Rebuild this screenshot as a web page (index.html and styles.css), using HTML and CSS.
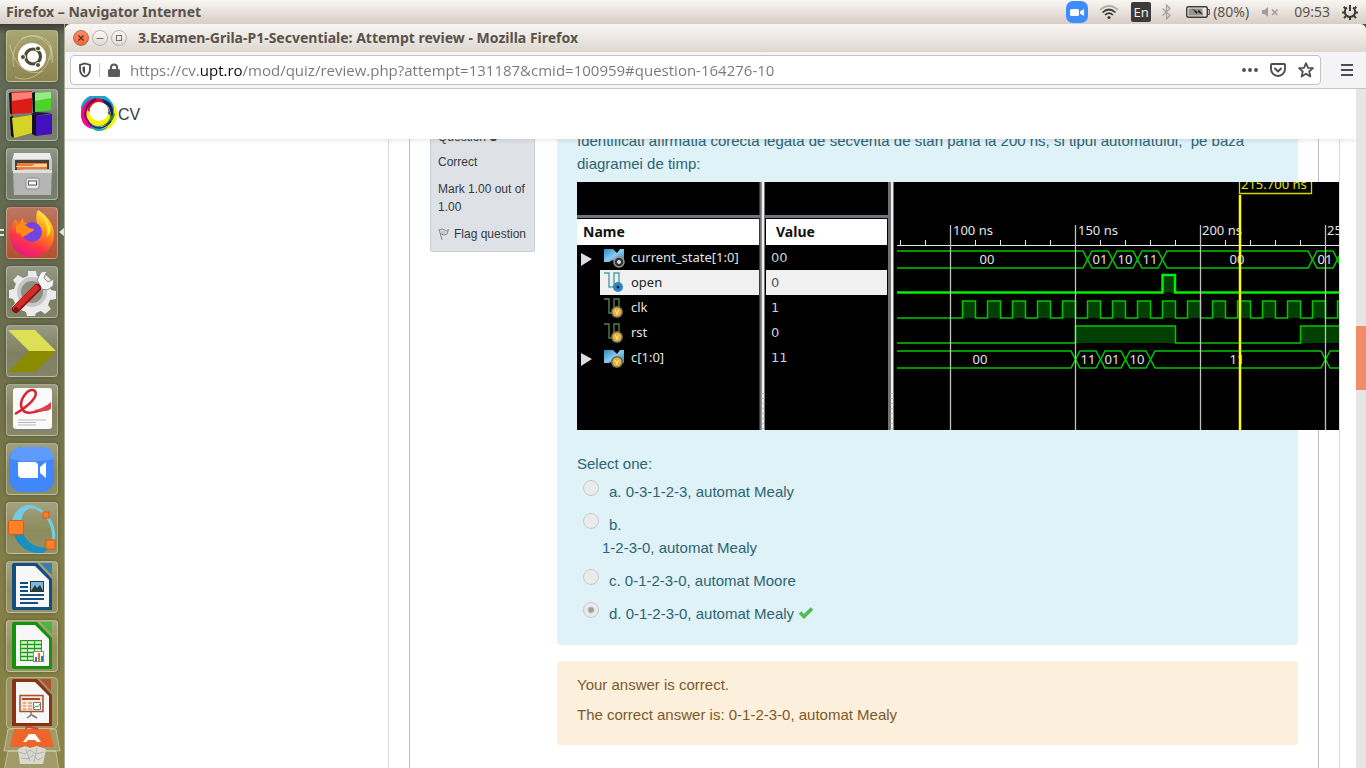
FILE: index.html
```html
<!DOCTYPE html>
<html lang="ro">
<head>
<meta charset="utf-8">
<title>3.Examen-Grila-P1-Secventiale: Attempt review</title>
<link rel="stylesheet" href="styles.css">
</head>
<body>
<div class="desktop">
  <header class="panel">
    <span class="panel-title">Firefox – Navigator Internet</span>
    <div class="tray">
      <svg class="tray-zoom" width="22" height="22" viewBox="0 0 22 22"><rect width="22" height="22" rx="7" fill="#3f8cff"/><rect x="4" y="8" width="9" height="7" rx="1.500" fill="#fff"/><path d="M14 10.500l4-2.500v7l-4-2.500z" fill="#fff"/></svg>
      <svg class="tray-wifi" width="20" height="16" viewBox="0 0 20 16" fill="none" stroke-width="1.700"><path d="M1 6Q10-2 19 6" stroke="#b3aea8"/><path d="M3.500 8.500Q10 2.500 16.500 8.500M6 11Q10 7 14 11" stroke="#3c3b37"/><circle cx="10" cy="13.500" r="1.600" fill="#3c3b37"/></svg>
      <span class="lang">En</span>
      <svg class="tray-bt" width="9" height="16" viewBox="0 0 9 16" fill="none" stroke="#a7a29c" stroke-width="1.300"><path d="M.5 4.500l7.500 7-3.500 3.500V1l3.500 3.500-7.500 7"/></svg>
      <svg class="tray-batt" width="24" height="12" viewBox="0 0 24 12"><rect x=".7" y=".7" width="20.600" height="10.600" rx="1.500" fill="none" stroke="#3c3b37" stroke-width="1.400"/><path d="M22 3.500h1.300v5H22" fill="none" stroke="#3c3b37"/><rect x="2.500" y="2.500" width="14" height="7" fill="#97938d"/><path d="M6 2.500l6 3.500 .5-2.500 5 5.500-6-3-1 2z" fill="#262522"/></svg>
      <span class="panel-text">(80%)</span>
      <svg class="tray-mute" width="18" height="12" viewBox="0 0 18 12"><path d="M1 4h2.500L7 1v10L3.500 8H1z" fill="#a39e98"/><path d="M11 3.500l5.500 5.500M16.500 3.500L11 9" stroke="#a39e98" stroke-width="1.600"/></svg>
      <span class="panel-text clock">09:53</span>
      <svg class="tray-power" width="16" height="16" viewBox="0 0 16 16" fill="none" stroke="#3c3b37"><path d="M5 3.500a5.200 5.200 0 1 0 6 0" stroke-width="2"/><path d="M8 1v6" stroke-width="2"/><path d="M3.500 4.500L1.700 2.700M12.500 4.500l1.800-1.800M2.800 8.500H0M13.200 8.500H16M4 12l-2 2M12 12l2 2M8 13v3" stroke-width="2"/></svg>
    </div>
  </header>

  <div class="workspace">
    <nav class="launcher" aria-label="Launcher">
      <div class="tiles">
        <button class="tile tile-dash" aria-label="Dash"><svg width="50" height="50" viewBox="0 0 50 50"><g fill="none" stroke="#e3dfb3" stroke-opacity=".55"><path d="M7 36C2 18 15 2 30 5s17 14 13 24M3 14C9 42 27 44 36 40M8 46C22 54 47 38 43 14M14 8C28-1 49 12 45 32"/></g><circle cx="25" cy="26" r="14" fill="#fff"/><circle cx="26" cy="25.500" r="7.500" fill="none" stroke="#4d4b31" stroke-width="3.200"/><g fill="#4d4b31" stroke="#fff"><circle cx="16" cy="26" r="2.500"/><circle cx="31" cy="17.500" r="2.500"/><circle cx="31" cy="34" r="2.500"/></g></svg></button>
        <button class="tile" aria-label="Code::Blocks"><svg width="50" height="50" viewBox="0 0 50 50"><path d="M2 3l3-1v23L3 23zM25 3l3-1v20l-2 1zM3 27l3-1 1 22-3-2zM24 25l5-1v22l-4-2z" fill="#111"/><path d="M4 2l21-1v22L5 24z" fill="#db1d16"/><path d="M5 3l20-1v6L5 11z" fill="#fb8177"/><path d="M28 3l16-1v18l-16 2z" fill="#4bd52b"/><path d="M28 3l16-1v6l-16 3z" fill="#95ec83"/><path d="M5 28l20-3v18L7 48z" fill="#d6d326"/><path d="M29 26l16-2v20l-16 2z" fill="#4310bd"/><path d="M24 24l4-2 17 1-16 3z" fill="#22104d"/></svg></button>
        <button class="tile" aria-label="Files"><svg width="50" height="50" viewBox="0 0 50 50"><path d="M7 4h36l2 9H5z" fill="#ededed"/><path d="M5 10h40v12H5z" fill="#c7c7c7"/><path d="M8 11h34v12H8z" fill="#44413d"/><path d="M10 14h30v8H10z" fill="#ef7c35"/><path d="M9 17h16l3-2h12v3H9z" fill="#ffd0a0"/><path d="M6 21h9l2-1h28l-1 26H7z" fill="#b5b5b5"/><path d="M6 21h39v3H6z" fill="#dedede"/><rect x="19" y="29" width="13" height="11" rx="2" fill="#e8e8e8" stroke="#8b8b8b"/><rect x="21.500" y="32" width="8" height="4" fill="#fff" stroke="#555"/></svg></button>
        <button class="tile tile-firefox" aria-label="Firefox"><svg width="50" height="50" viewBox="0 0 50 50"><defs><linearGradient id="fx" x1=".8" y1="0" x2=".3" y2="1"><stop offset="0" stop-color="#fff44f"/><stop offset=".35" stop-color="#ff980e"/><stop offset=".7" stop-color="#ff3647"/><stop offset="1" stop-color="#e31587"/></linearGradient></defs><path d="M31 2c8 5 16 13 16 25 0 13-10 22-22 22S3 40 3 27c0-6 3-11 5-16l4 4 4-5c0 4 2 5 6 5l8 2c-1-6-1-12 1-15z" fill="url(#fx)"/><circle cx="25" cy="24" r="10" fill="#7542e5"/><path d="M9 18c5-4 10-1 13 2l5 1c0 3-5 3-7 6l-5 2c-1-4-4-5-6-4z" fill="#ff8a16"/><path d="M31 3c5 7 11 13 9 26 8-8 1-18-9-26z" fill="#ffe13d"/></svg></button>
        <button class="tile" aria-label="System Settings"><svg width="50" height="50" viewBox="0 0 50 50"><path d="M21 4h8l1 5 5 2 4-3 6 6-3 4 2 5 5 1v8l-6 1-2 5 3 4-6 5-4-3-5 2-1 3h-8l-1-4-5-2-4 3-5-6 3-4-2-4-4-1v-8l5-1 2-5-3-4 5-5 5 3 5-2z" fill="#ebebeb"/><circle cx="25" cy="25" r="13" fill="#8e8e7f" stroke="#c6c6c6" stroke-width="4"/><path d="M34 20l-4-7 4-8 6-1-3 7 4 4 6-3-1 7-6 4-6-1z" fill="#f4f4f4" stroke="#8b8b8b"/><path d="M9 42L30 21" stroke="#86100f" stroke-width="8" stroke-linecap="round"/><path d="M9 41L29 21" stroke="#d22b28" stroke-width="6" stroke-linecap="round"/><circle cx="9" cy="42" r="2" fill="#671818"/></svg></button>
        <button class="tile" aria-label="ISE"><svg width="50" height="50" viewBox="0 0 50 50"><path d="M1 4h27l21 21H22z" fill="#dde055"/><path d="M22 25h27L28 46H1z" fill="#8b8b00"/></svg></button>
        <button class="tile" aria-label="Document Viewer"><svg width="50" height="50" viewBox="0 0 50 50"><rect x="6" y="4" width="39" height="42" rx="3" fill="#80807a"/><rect x="6" y="3" width="39" height="41" rx="3" fill="#fafafa"/><path d="M8 29C20 22 32 12 28 6c-6-5-17 9-13 18 5 8 15 1 27 0" fill="none" stroke="#d92332" stroke-width="2.500"/><path d="M26 25q10-1 18-8v7q-8 4-18 1z" fill="#df414b"/><path d="M11 35h28M11 37.500h18M11 40h18" stroke="#b8b8b8"/></svg></button>
        <button class="tile" aria-label="Zoom"><svg width="50" height="50" viewBox="0 0 50 50"><rect x="2" y="3" width="45" height="45" rx="13" fill="#4087fc"/><path d="M3 15Q4 3 16 3h18q12 0 13 12Q25 20 3 15z" fill="#72aaff" fill-opacity=".6"/><path d="M11 18h16q4 0 4 4v12H15q-4 0-4-4zM33 23l6-5v16l-6-5z" fill="#fff"/></svg></button>
        <button class="tile" aria-label="Octave"><svg width="50" height="50" viewBox="0 0 50 50"><path d="M5 22C5 7 18-2 30 4c14 6 20 22 18 33l-3-1c1-10-4-24-15-29C20 2 14 11 14 21z" fill="#72cce6"/><path d="M6 28c3 14 15 24 30 22l8-6c-16 3-26-5-30-20z" fill="#1990c2"/><g fill="#ff8029" stroke="#d75b09"><rect x="1.500" y="17.500" width="15" height="14" rx="2"/><rect x="36" y="9" width="6" height="6"/><rect x="39" y="37" width="9" height="9"/></g></svg></button>
        <button class="tile" aria-label="LibreOffice Writer"><svg width="50" height="50" viewBox="0 0 50 50"><path d="M7 1h23l15 16v31H7q-2 0-2-2V3q0-2 2-2z" fill="#124e82"/><path d="M9 4h19l14 14v27H9z" fill="#f7f7f7"/><path d="M33 1h12v12z" fill="#397fae"/><path d="M13 21h8M13 25h8M13 29h8M13 33h24M13 37h24M13 41h18" stroke="#124e82" stroke-width="1.800"/><rect x="23.500" y="19.500" width="13" height="10" fill="#79b9df" stroke="#243846"/><path d="M24 29l4-6 2 3 3-3 3 6z" fill="#253b36"/></svg></button>
        <button class="tile" aria-label="LibreOffice Calc"><svg width="50" height="50" viewBox="0 0 50 50"><path d="M7 1h23l15 16v31H7q-2 0-2-2V3q0-2 2-2z" fill="#15920d"/><path d="M9 4h19l14 14v27H9z" fill="#f7f7f7"/><path d="M33 1h12v12z" fill="#4eb73b"/><rect x="13" y="19" width="22" height="21" fill="#1c9e12"/><path d="M14 21.500h20M14 25.500h20M14 29.500h20M14 33.500h20M14 37.500h20" stroke="#dff4da" stroke-width="2.500" stroke-dasharray="6 1"/><rect x="26.500" y="30.500" width="10" height="10" fill="#fff" stroke="#888"/><path d="M28 40v-4h2v4z" fill="#287ac0"/><path d="M31 40v-8h2v8z" fill="#ed6f17"/><path d="M34 40v-5h2v5z" fill="#287ac0"/></svg></button>
      </div>
      <svg class="folded" width="64" height="96" viewBox="0 0 64 96"><rect x="6.500" y="5.500" width="51" height="51" rx="4" fill="#fff" fill-opacity=".15" stroke="#fff" stroke-opacity=".35"/><path d="M14 7h23l15 16v31H12V9q0-2 2-2z" fill="#8b3214"/><path d="M16 10h19l14 14v27H16z" fill="#f7f7f7"/><path d="M40 7h11v12z" fill="#ad5331"/><rect x="20" y="23.500" width="23" height="16" fill="#f6e7dc" stroke="#a85026" stroke-width="1.500"/><path d="M22 27h18" stroke="#a64c22" stroke-width="2"/><path d="M23 31h3M23 34h3M23 37h3M28 31h4M28 34h4M28 37h4" stroke="#d3703a"/><path d="M33.500 30.500h7v7h-7z" fill="#fff" stroke="#777"/><path d="M34 36l2-2 2 1 2-3" stroke="#36a440" fill="none"/><path d="M31 40v3l-4 3M32 43l5 3" stroke="#777" stroke-width="1.500" fill="none"/><path d="M8 57h48l4 22H4zM8 79h48l3 20H4z" fill="#fff" fill-opacity=".2" stroke="#fff" stroke-opacity=".4"/><path d="M14 57h35l5 18H10z" fill="#ee642a"/><path d="M26 57q0-3 4-2 4 1 8 2" stroke="#c94d38" stroke-width="2" fill="none"/><path d="M23 70l6-8h6l6 8h-4l-2-2h-7l-2 2z" fill="#fff"/><path d="M18 77l7-3 5 2 7-2 9 3-3 15H20z" fill="#d9d9d2"/><path d="M19 80l6 2 5-4 6 4 8-2M21 86l7 1 5-4 5 5 5-3M26 77l4 12M37 76l-3 14" stroke="#b5b5ae" fill="none"/></svg>
      <i class="mark-left"></i><i class="mark-right"></i>
    </nav>

    <section class="window">
      <div class="titlebar">
        <div class="win-buttons">
          <button class="win-btn win-close" aria-label="Close"><svg width="8" height="8" viewBox="0 0 8 8"><path d="M1.500 1.500l5 5M6.500 1.500l-5 5" stroke="#5a2d1c" stroke-width="1.200"/></svg></button>
          <button class="win-btn" aria-label="Minimize"><svg width="8" height="8" viewBox="0 0 8 8"><path d="M.5 4.500h7" stroke="#77716b"/></svg></button>
          <button class="win-btn" aria-label="Maximize"><svg width="8" height="8" viewBox="0 0 8 8"><rect x="1.500" y="1.500" width="5" height="5" fill="none" stroke="#77716b"/></svg></button>
        </div>
        <span class="window-title">3.Examen-Grila-P1-Secventiale: Attempt review - Mozilla Firefox</span>
      </div>
      <div class="toolbar">
        <div class="urlbar">
          <svg class="shield" width="14" height="16" viewBox="0 0 14 16"><path d="M7 1.500L12 3v4c0 4-2 6.500-5 7.500C4 13.500 2 11 2 7V3z" fill="none" stroke="#4a4a4f" stroke-width="1.800"/><path d="M7 4.500L4.500 5v2c0 2.500 1 4 2.500 5z" fill="#4a4a4f"/></svg>
          <svg class="lock" width="12" height="14" viewBox="0 0 12 14"><path d="M3 6V4.500a3 3 0 0 1 6 0V6" fill="none" stroke="#5b5b5f" stroke-width="2"/><rect y="6" width="12" height="8" rx="1.500" fill="#5b5b5f"/></svg>
          <input class="url" type="text" aria-label="Address" value="https://cv.upt.ro/mod/quiz/review.php?attempt=131187&amp;cmid=100959#question-164276-10">
          <button class="icon-btn" aria-label="Page actions"><svg width="16" height="16" viewBox="0 0 16 16" fill="#4c4c50"><circle cx="2" cy="8" r="1.900"/><circle cx="8" cy="8" r="1.900"/><circle cx="14" cy="8" r="1.900"/></svg></button>
          <button class="icon-btn" aria-label="Save to Pocket"><svg width="16" height="16" viewBox="0 0 16 16" fill="none" stroke="#4c4c50" stroke-width="1.900" stroke-linecap="round" stroke-linejoin="round"><path d="M2 2h12q1 0 1 1v4a7 7 0 0 1-14 0V3q0-1 1-1z"/><path d="M5 6.500l3 3 3-3"/></svg></button>
          <button class="icon-btn" aria-label="Bookmark"><svg width="16" height="16" viewBox="0 0 16 16" fill="none" stroke="#4c4c50" stroke-width="1.700" stroke-linejoin="round"><path d="M8 1.200l2 4.600 5 .4-3.800 3.300 1.200 5L8 11.800l-4.400 2.700 1.200-5L1 6.200l5-.4z"/></svg></button>
        </div>
        <button class="icon-btn" aria-label="Menu"><svg width="12" height="14" viewBox="0 0 12 14" stroke="#4c4c50" stroke-width="2"><path d="M0 2h12M0 7h12M0 12h12"/></svg></button>
      </div>

      <div class="viewport">
        <div class="page">
          <header class="site-header">
            <a class="brand" href="#"><svg width="37" height="36" viewBox="0 0 37 36"><circle cx="19" cy="18" r="17" fill="#ffef00"/><path d="M10 31A17 17 0 1 1 33 12L30 26Q26 35 17 35q-5-1-7-4z" fill="#13a5ca"/><path d="M20 3C9-1 0 9 0 19c0 7 4 12 11 14L7 16z" fill="#f40889"/><path d="M6 16C6 6 19-2 27 7l-3 4-13 6z" fill="#e3092c"/><path d="M5 23Q2 9 15 3" fill="none" stroke="#5d0f55" stroke-width="2"/><path d="M21 3q9 2 11 10t-4 14L24 10z" fill="#1a1879"/><path d="M20 30q14-1 15-13-3 14-15 16z" fill="#ffef00"/><path d="M17 29l13-9 4-3q-2 13-17 13z" fill="#168b43"/><circle cx="17.500" cy="18" r="12" fill="#ffef00"/><path d="M6 14q2-7 10-8l-5 12z" fill="#e3092c"/><path d="M20 6q9 4 9 13l-7-5z" fill="#1a1879"/><path d="M6 23q3 9 13 9 7-1 11-7" fill="none" stroke="#2d277a" stroke-width="1.500"/><circle cx="18" cy="15.500" r="9.500" fill="#fff"/></svg><span>CV</span></a>
          </header>
          <main class="region">
            <div class="card">
              <article class="question">
                <aside class="info">
                  <h3 class="info-no">Question <b>9</b></h3>
                  <p>Correct</p>
                  <p>Mark 1.00 out of 1.00</p>
                  <a class="flag" href="#"><svg width="12" height="12" viewBox="0 0 12 12" fill="none" stroke="#888"><path d="M1 1l3 11M1.500 2q3-2 5 0t4-.5L9 6Q6 8 3 6"/><path d="M4 3v3M6 3v3" stroke="#aaa"/></svg>Flag question</a>
                </aside>
                <div class="content">
                  <section class="formulation">
                    <p class="qtext">Identificati afirmatia corecta legata de secventa de stari pana la 200 ns, si tipul automatului, &nbsp;pe baza diagramei de timp:</p>
                    <svg class="wave" width="790" height="248" viewBox="0 0 790 248" role="img" aria-label="Diagrama de timp">
                      <defs>
                        <linearGradient id="blue" x2="1" y2="1"><stop stop-color="#238bc5"/><stop offset=".5" stop-color="#8ac9ee"/><stop offset="1" stop-color="#2b80ba"/></linearGradient>
                        <g id="busicon"><path d="M0 0h9l4 4 3-4h4v13h-8l-3-2-4 2H0z" fill="url(#blue)"/></g>
                        <path id="sig" d="M0 1h5v14h5V1h5v10" fill="none" stroke-width="1.400"/>
                        <g id="gold"><circle r="6" fill="#666"/><circle r="4.500" fill="#eeb12c"/><path d="M-2-2L0 1l2-3M0 1v2" stroke="#fff3bc" fill="none"/></g>
                      </defs>
                      <rect width="790" height="248" fill="#000"/>
                      <path d="M0 34.500h183M188 34.500h124" stroke="#73737b" stroke-width="3"/>
                      <path d="M183.500 0v248M312 0v248" stroke="#707077" stroke-width="2"/>
                      <path d="M186 0v248M315 0v248" stroke="#f0f0f0" stroke-width="3"/>
                      <path d="M186 211v37M315 211v37" stroke="#bbb" stroke-width="3" stroke-dasharray="1 4"/>
                      <path d="M0 37h182v26H0zM189 37h121v26H189z" fill="#fff"/>
                      <path d="M23 88h159v25H23zM189 88h121v25H189z" fill="#f0f0f0"/>
                      <g class="wave-head"><text x="6" y="55">Name</text><text x="199" y="55">Value</text></g>
                      <g class="wave-name"><text x="54" y="80">current_state[1:0]</text><text class="dark" x="54" y="105">open</text><text x="54" y="130">clk</text><text x="54" y="155">rst</text><text x="54" y="180">c[1:0]</text></g>
                      <g class="wave-value"><text x="194" y="80">00</text><text class="mid" x="194" y="105">0</text><text x="194" y="130">1</text><text x="194" y="155">0</text><text x="194" y="180">11</text></g>
                      <path d="M4 71l11 6-11 7zM4 171l11 6-11 7z" fill="#ddd"/>
                      <use href="#busicon" x="27" y="67"/><circle cx="42" cy="80" r="5" fill="#333" stroke="#999" stroke-width="1.500"/><circle cx="42" cy="80" r="2" fill="#ddd"/>
                      <use href="#sig" x="27" y="90" stroke="#519eaa"/><circle cx="41" cy="105" r="5" fill="#3283c2"/><circle cx="41" cy="105" r="1.500" fill="#123"/>
                      <use href="#sig" x="27" y="116" stroke="#55804a"/><use href="#gold" x="40" y="130"/>
                      <use href="#sig" x="27" y="141" stroke="#55804a"/><use href="#gold" x="40" y="155"/>
                      <use href="#busicon" x="27" y="168"/><use href="#gold" x="40" y="180"/>

                      <g fill="none" stroke="#00c800" stroke-width="1.500">
                        <path d="M320 69H506L515 86H531L540 69H556L565 86H581L590 69H731L740 86H756L765 69"/>
                        <path d="M320 86H506L515 69H531L540 86H556L565 69H581L590 86H731L740 69H756L765 86"/>
                        <path d="M320 169H494L503 186H519L528 169H544L553 186H569L578 169H744L753 186H790"/>
                        <path d="M320 186H494L503 169H519L528 186H544L553 169H569L578 186H744L753 169H790"/>
                        <path fill="#004000" d="M320 136H385.500v-17h13v17h12v-17h13v17h12v-17h13v17h12v-17h13v17h12v-17h13v17h12v-17h13v17h12v-17h13v17h12v-17h13v17h12v-17h13v17h12v-17h13v17h12v-17h13v17h12v-17h13v17h12v-17h13v17h12v-17h13v17h12v-17h13v17h12v-17h13v17"/>
                        <path fill="#004000" d="M320 161H498.500V144H598.500V161H723.500V144H790V161"/>
                      </g>
                      <path d="M320 110.500H585.500V93H598V110.500H790" fill="#004000" stroke="#00f000" stroke-width="2.500"/>
                      <path d="M320 63.500H790M323.500 58v5M348.500 58v5M398.500 58v5M423.500 58v5M448.500 58v5M473.500 58v5M523.500 58v5M548.500 58v5M573.500 58v5M598.500 58v5M648.500 58v5M673.500 58v5M698.500 58v5M723.500 58v5" stroke="#e8e8e8"/>
                      <path d="M373.500 43v205M498.500 43v205M623.500 43v205M748.500 43v205" stroke="#c0c0c0" stroke-width="1.300"/>
                      <g class="wave-label"><text x="376" y="53">100 ns</text><text x="501" y="53">150 ns</text><text x="625" y="53">200 ns</text><text x="750" y="53">25</text></g>
                      <g class="wave-label centered"><text x="410" y="82">00</text><text x="523" y="82">01</text><text x="548" y="82">10</text><text x="573" y="82">11</text><text x="660" y="82">00</text><text x="748" y="82">01</text><text x="403" y="182">00</text><text x="511" y="182">11</text><text x="535" y="182">01</text><text x="560" y="182">10</text><text x="660" y="182">11</text></g>
                      <path d="M663 13v235" stroke="#ff0" stroke-width="2.500"/>
                      <path d="M662.500 0v11.500h72V0" fill="none" stroke="#d8d800" stroke-width="1.300"/>
                      <text class="wave-cursor" x="664" y="7">215.700 ns</text>
                    </svg>
                    <fieldset class="answers">
                      <legend>Select one:</legend>
                      <div class="answer"><input type="radio" name="q" id="qa" disabled><label for="qa">a. 0-3-1-2-3, automat Mealy</label></div>
                      <div class="answer"><input type="radio" name="q" id="qb" disabled><label for="qb">b.<span class="answer-body">1-2-3-0, automat Mealy</span></label></div>
                      <div class="answer"><input type="radio" name="q" id="qc" disabled><label for="qc">c. 0-1-2-3-0, automat Moore</label></div>
                      <div class="answer"><input type="radio" name="q" id="qd" checked disabled><label for="qd">d. 0-1-2-3-0, automat Mealy</label><svg class="tick" width="16" height="12" viewBox="0 0 16 12"><path d="M2 5.500l4 4 8-8" fill="none" stroke="#55b955" stroke-width="3.600"/></svg></div>
                    </fieldset>
                  </section>
                  <section class="feedback">
                    <p>Your answer is correct.</p>
                    <p>The correct answer is: 0-1-2-3-0, automat Mealy</p>
                  </section>
                </div>
              </article>
            </div>
          </main>
        </div>
        <div class="scroll-track"><div class="scroll-thumb"></div></div>
      </div>
    </section>
  </div>
</div>
</body>
</html>
```
FILE: styles.css
```css
* { box-sizing: border-box; }
body { margin: 0; font: 15px/23px "Liberation Sans", Arial, sans-serif; }
p { margin: 0; }
button { margin: 0; padding: 0; border: 0; background: none; }
svg { display: block; flex: none; }

.desktop { display: flex; flex-direction: column; height: 100vh; overflow: hidden; background: #4a4a42; }

.panel {
  display: flex; align-items: center; justify-content: space-between; flex: none;
  height: 24px; padding: 0 8px 0 6px;
  background: linear-gradient(#f8f6f3, #d8cec5);
  font: 14px/24px "Noto Sans", "Open Sans", sans-serif; color: #5a534b;
}
.panel-title { font-weight: 700; }
.tray { display: flex; align-items: center; }
.tray-wifi { margin-left: 11px; }
.lang {
  width: 20px; height: 20px; margin: 0 11px 0 12px; border-radius: 2px;
  background: #3c3b39; color: #f1eee9; font-size: 13px; line-height: 20px; text-align: center;
}
.tray-batt { margin: 0 3px 0 15px; }
.tray-mute { margin: 0 15px 0 12px; }
.tray-power { margin-left: 12px; }

.workspace { display: flex; flex: 1; min-height: 0; }

.launcher {
  position: relative; flex: none; width: 65px; padding-top: 6px; overflow: hidden;
  border-right: 1px solid #a9ab98;
  background: linear-gradient(#3c3d34 0, #626b57 10px, #626a52 160px, #6d6f4c 330px, #827e48 540px, #8b8444 100%);
}
.tiles { display: flex; flex-direction: column; gap: 7px; align-items: center; }
.tile {
  width: 52px; height: 52px; border: 1px solid rgba(255,255,255,.3); border-radius: 4px;
  background: linear-gradient(rgba(255,255,255,.3), rgba(255,255,255,.12) 55%, rgba(255,255,255,.15));
  box-shadow: 0 0 4px rgba(0,0,0,.3);
}
.tile-dash { background: linear-gradient(#aaa671, #8d8550); }
.tile-firefox { background: linear-gradient(#bc7760, #b2502f); }
.mark-left, .mark-right { position: absolute; }
.mark-left { left: 0; top: 205px; width: 4px; height: 7px; border: solid #e4e4df; border-width: 2px 0; }
.mark-right { right: 0; top: 204px; border: solid transparent; border-width: 4px 5px 4px 0; border-right-color: #e4e4df; }

.window { display: flex; flex-direction: column; flex: 1; min-width: 0; border-radius: 6px 6px 0 0; overflow: hidden; background: #fff; }
.titlebar {
  display: flex; align-items: center; gap: 11px; flex: none; height: 28px; padding-left: 8px;
  background: linear-gradient(#f9f7f5, #ded7d0);
}
.win-buttons { display: flex; gap: 3px; }
.win-btn {
  display: grid; place-items: center; width: 16px; height: 16px; border: 1px solid #b9b2aa;
  border-radius: 50%; background: linear-gradient(#fbf9f7, #dfd9d2);
}
.win-close { border-color: #bb6546; background: linear-gradient(#f98e6d, #ee6539); }
.window-title { font: 700 14px/28px "Noto Sans", "Open Sans", sans-serif; color: #5a534b; white-space: nowrap; }

.toolbar {
  display: flex; align-items: center; gap: 20px; flex: none; height: 37px; padding: 0 13px 0 5px;
  border-bottom: 1px solid #c6c6c8; background: #f4f4f6;
}
.urlbar {
  display: flex; align-items: center; gap: 12px; flex: 1; height: 30px; padding: 0 6px 0 7px;
  border: 1px solid #c3c3c6; border-radius: 4px; background: #fff;
}
.lock { box-sizing: content-box; margin-left: -5px; padding-left: 8px; border-left: 1px solid #c9c9cb; }
.url {
  flex: 1; min-width: 0; height: 24px; margin-left: -2px; padding: 0; border: 0; outline: 0;
  font: 15px/24px "Open Sans", "Noto Sans", sans-serif; color: transparent;
  background: linear-gradient(90deg, #77777b 70px, #0c0c0d 70px, #0c0c0d 112px, #77777b 112px);
  -webkit-background-clip: text; background-clip: text;
}

.viewport { display: flex; flex: 1; min-height: 0; }
.page { position: relative; flex: 1; min-width: 0; padding: 0 16px 0 323px; overflow: hidden; background: #fff; }
.site-header {
  position: absolute; inset: 0 0 auto 0; z-index: 2; display: flex; align-items: center;
  height: 50px; padding-left: 16px; background: #fff; box-shadow: 0 2px 4px rgba(0,0,0,.09);
}
.brand { display: flex; align-items: center; font-size: 16px; color: #373a3c; text-decoration: none; }
.scroll-track { flex: none; width: 10px; padding-top: 237px; background: #e5e5e5; }
.scroll-thumb { height: 64px; background: #f08c66; }

.region { min-height: 100%; padding: 0 20px; border: solid #dcdcdc; border-width: 0 1px; overflow: hidden; }
.card { min-height: 679px; padding: 0 20px; border: solid #bdbdbd; border-width: 0 1px; }
.question { display: flex; align-items: flex-start; gap: 22px; }
.info {
  display: flex; flex-direction: column; gap: 9px; flex: none; width: 105px; padding: 40px 7px 8px;
  border: 1px solid #cad0d7; border-top: 0; border-radius: 0 0 2px 2px; background: #dee2e6;
  font-size: 12px; line-height: 18px; color: #373a3c;
}
.info-no { margin: 0; font-size: 12px; font-weight: 400; line-height: 14px; }
.info-no b { font-size: 15px; line-height: 14px; }
.flag { display: flex; align-items: center; gap: 4px; color: inherit; text-decoration: none; white-space: nowrap; }
.content { flex: 1; min-width: 0; }
.formulation { padding: 40px 20px 20px; border-radius: 0 0 4px 4px; background: #def2f8; color: #2f6473; }
.wave { margin: 7px 0 22px; }
.wave text { font-family: "Noto Sans", "Open Sans", sans-serif; font-size: 13px; fill: #e4e4e4; }
.wave-head text { font-weight: 700; font-size: 14px; fill: #111; }
.wave text.dark { fill: #222; }
.wave text.mid { fill: #555; }
.wave-value text { font-family: "DejaVu Sans", sans-serif; fill: #d0d0d0; }
.centered text { text-anchor: middle; }
.wave text.wave-cursor { fill: #e6e600; }

.answers { display: flex; flex-direction: column; gap: 10px; margin: 0; padding: 5px 0 0; border: 0; }
.answers legend { padding: 0; }
.answer { display: flex; align-items: flex-start; padding-left: 6px; }
.answer input {
  appearance: none; width: 16px; height: 16px; margin: 0 10px 0 0; border: 1px solid #c9c9c9;
  border-radius: 50%; background: #ebebeb;
}
.answer input:checked { background: radial-gradient(circle, #9f9f9f 2px, #ebebeb 4px); }
.answer-body { display: block; margin-left: -7px; }
.tick { margin: 5px 0 0 4px; }

.feedback {
  display: flex; flex-direction: column; gap: 7px; margin-top: 16px; padding: 12px 20px 19px;
  border-radius: 4px; background: #fcefdc; color: #7d5a29;
}
```
